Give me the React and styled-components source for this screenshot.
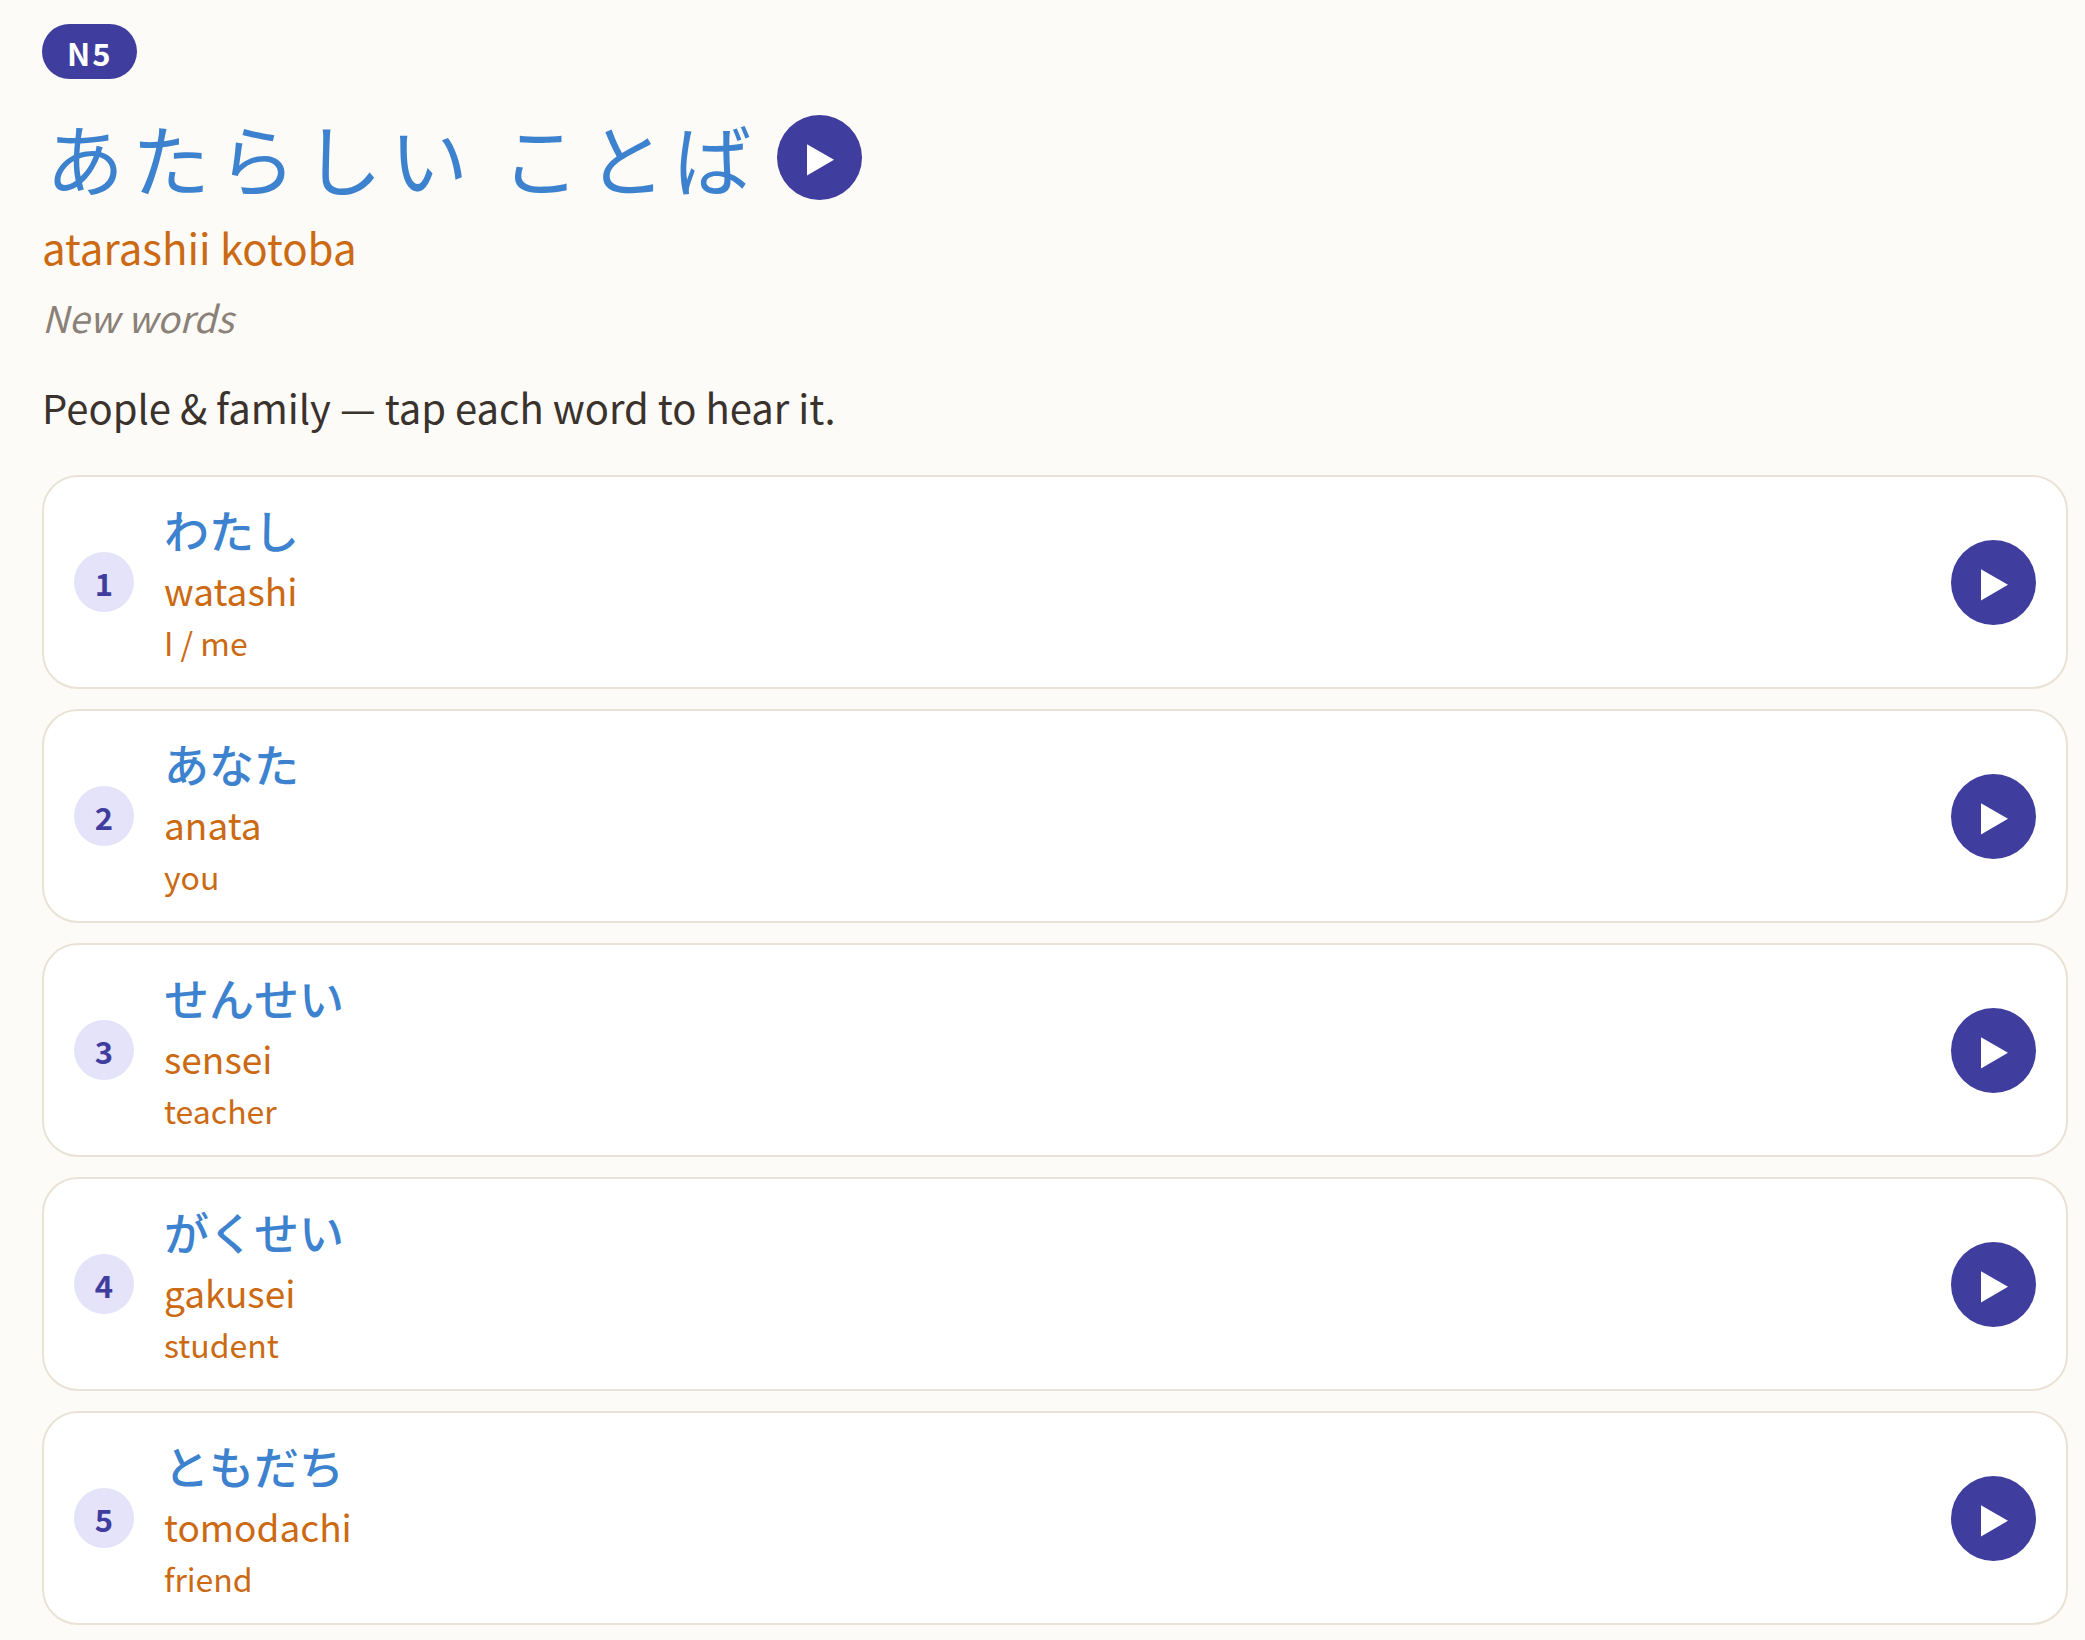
import React from 'react'
import styled, { createGlobalStyle } from 'styled-components'

const GlobalStyle = createGlobalStyle`
  body {
    margin: 0;
    background-color: #fdfbf7;
    color: #3a322d;
    font-family: 'Noto Sans CJK JP', sans-serif;
  }

  * {
    box-sizing: border-box;
  }
`

const Wrapper = styled.main`
  padding: 24px 17px 14px 42px;
`

const Level = styled.span`
  display: flex;
  align-items: center;
  width: fit-content;
  height: 55px;
  padding: 2px 24px 0 25px;
  border-radius: 28px;
  background-color: #3f3d9e;
  color: white;
  font-size: 31px;
  font-weight: bold;
  line-height: 40px;
  letter-spacing: 2px;
`

const TitleRow = styled.div`
  display: flex;
  align-items: center;
  gap: 18px;
  margin-top: 22px;
  padding-left: 4px;
`

const Title = styled.h1`
  margin: 0;
  color: #3d82ce;
  font-size: 78px;
  font-weight: normal;
  line-height: 112px;
  letter-spacing: 8px;
`

const Reading = styled.p`
  margin: 0;
  color: #cb6a12;
  font-size: 42px;
  line-height: 68px;
`

const Meaning = styled.p`
  margin: 0;
  color: #8a8178;
  font-size: 37px;
  font-style: italic;
  line-height: 72px;
`

const Intro = styled.p`
  margin: 20px 0 34px;
  font-size: 40px;
  line-height: 68px;
`

const WordList = styled.ul`
  display: flex;
  flex-direction: column;
  gap: 20px;
  margin: 0;
  padding: 0;
  list-style: none;
`

const WordCard = styled.li`
  display: flex;
  align-items: center;
  gap: 30px;
  padding: 21px 30px;
  border: 2px solid #eae2d6;
  border-radius: 36px;
  background-color: white;
`

const Number = styled.span`
  display: flex;
  align-items: center;
  justify-content: center;
  flex-shrink: 0;
  width: 60px;
  height: 60px;
  border-radius: 50%;
  background-color: #e5e3fa;
  color: #3f3d9e;
  font-size: 31px;
  font-weight: bold;
`

const WordText = styled.div`
  flex: 1;
`

const Kana = styled.p`
  margin: 0;
  color: #3d82ce;
  font-size: 45px;
  font-weight: 500;
  line-height: 64px;
`

const Romaji = styled.p`
  margin: 0;
  color: #cb6a12;
  font-size: 37px;
  line-height: 56px;
`

const English = styled.p`
  margin: 0;
  color: #cb6a12;
  font-size: 32px;
  line-height: 48px;
`

const Play = styled.button`
  display: flex;
  align-items: center;
  justify-content: center;
  flex-shrink: 0;
  width: 85px;
  height: 85px;
  padding: 0;
  border: none;
  border-radius: 50%;
  background-color: #3f3d9e;
  cursor: pointer;
`

const words = [
  { kana: 'わたし', romaji: 'watashi', english: 'I / me' },
  { kana: 'あなた', romaji: 'anata', english: 'you' },
  { kana: 'せんせい', romaji: 'sensei', english: 'teacher' },
  { kana: 'がくせい', romaji: 'gakusei', english: 'student' },
  { kana: 'ともだち', romaji: 'tomodachi', english: 'friend' },
]

function PlayButton({ label }) {
  return (
    <Play type="button" aria-label={label}>
      <svg width="85" height="85" viewBox="0 0 85 85" fill="white" aria-hidden="true">
        <path d="M30 29.2V60.5L57 44.8Z" />
      </svg>
    </Play>
  )
}

function App() {
  return (
    <Wrapper>
      <GlobalStyle />
      <Level>N5</Level>
      <TitleRow>
        <Title lang="ja">あたらしい ことば</Title>
        <PlayButton label="atarashii kotoba" />
      </TitleRow>
      <Reading>atarashii kotoba</Reading>
      <Meaning>New words</Meaning>
      <Intro>People &amp; family — tap each word to hear it.</Intro>
      <WordList>
        {words.map((e, i) => (
          <WordCard key={e.romaji}>
            <Number>{i + 1}</Number>
            <WordText>
              <Kana lang="ja">{e.kana}</Kana>
              <Romaji>{e.romaji}</Romaji>
              <English>{e.english}</English>
            </WordText>
            <PlayButton label={e.romaji} />
          </WordCard>
        ))}
      </WordList>
    </Wrapper>
  )
}

export default App
